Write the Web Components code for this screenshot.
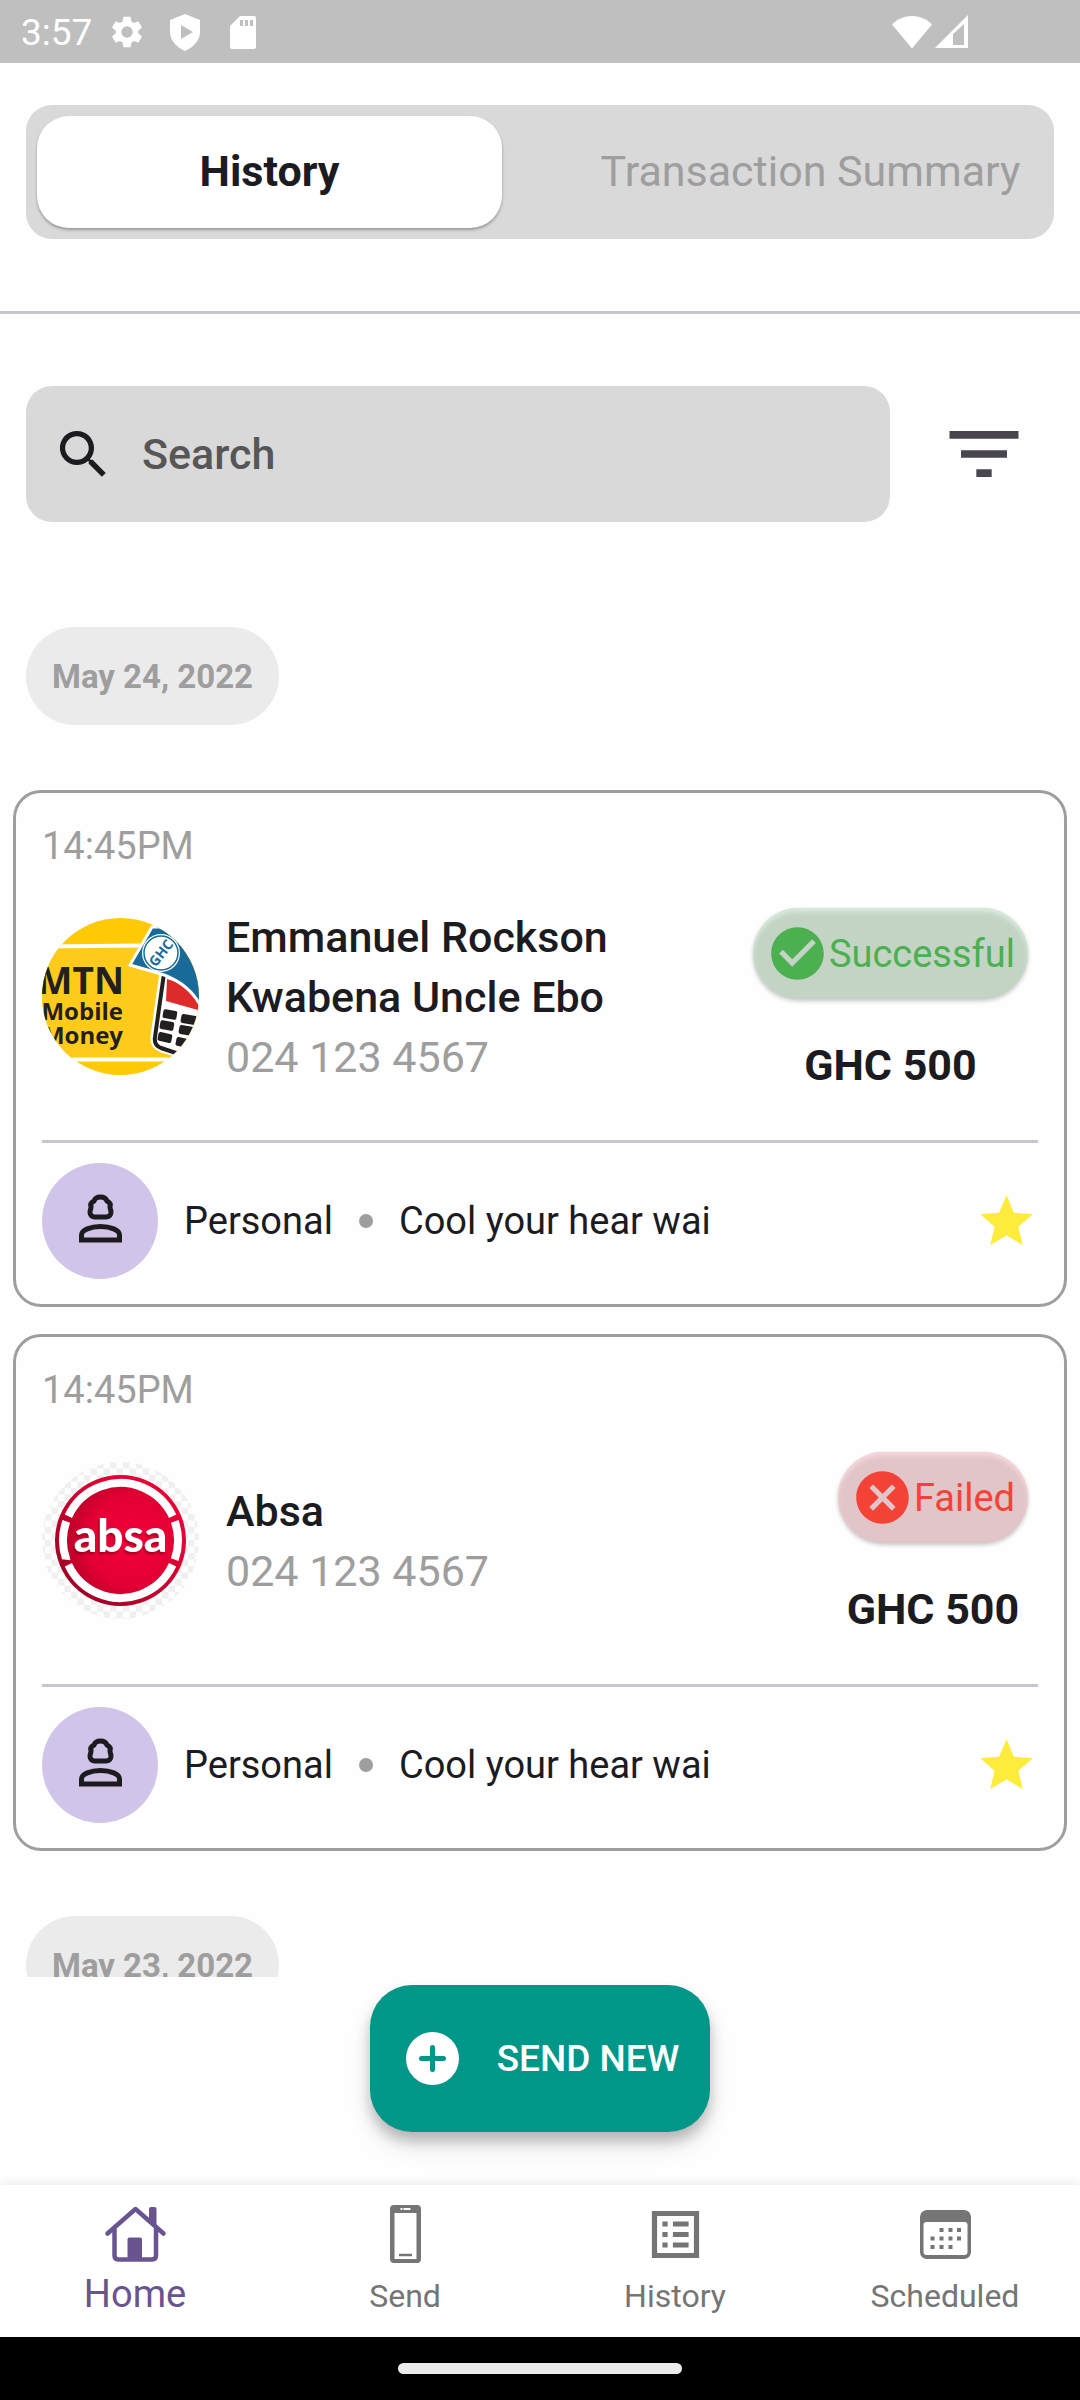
<!DOCTYPE html>
<html lang="en">
<head>
<meta charset="utf-8">
<meta name="viewport" content="width=device-width, initial-scale=1">
<title>Transactions</title>
<style>
  html, body { margin: 0; height: 100%; }
  body {
    background: #fefefe;
    color: #1c1b1f;
    font-family: Roboto, "Liberation Sans", sans-serif;
    font-size: 38px;
  }
</style>
</head>
<body>
<app-screen>
  <status-bar slot="status" time="3:57"></status-bar>
  <segmented-tabs slot="header">
    <tab-button selected>History</tab-button>
    <tab-button>Transaction Summary</tab-button>
  </segmented-tabs>
  <search-row slot="search"></search-row>

  <date-chip>May 24, 2022</date-chip>
  <card-stack>
    <transaction-card time="14:45PM" phone="024 123 4567" amount="GHC 500" category="Personal" note="Cool your hear wai">
      <mtn-logo slot="logo"></mtn-logo>
      <span slot="name">Emmanuel Rockson<br>Kwabena Uncle Ebo</span>
      <status-badge slot="status" kind="success">Successful</status-badge>
    </transaction-card>
    <transaction-card time="14:45PM" phone="024 123 4567" amount="GHC 500" category="Personal" note="Cool your hear wai">
      <absa-logo slot="logo"></absa-logo>
      <span slot="name">Absa</span>
      <status-badge slot="status" kind="failed">Failed</status-badge>
    </transaction-card>
  </card-stack>
  <date-chip>May 23, 2022</date-chip>

  <send-button slot="action">SEND NEW</send-button>
  <bottom-nav slot="nav">
    <nav-item icon="home" href="#home" active>Home</nav-item>
    <nav-item icon="send" href="#send">Send</nav-item>
    <nav-item icon="history" href="#history">History</nav-item>
    <nav-item icon="scheduled" href="#scheduled">Scheduled</nav-item>
  </bottom-nav>
  <gesture-bar slot="gesture"></gesture-bar>
</app-screen>

<script>
  const define = (name, render) => customElements.define(name, class extends HTMLElement {
    connectedCallback() {
      if (this.shadowRoot) return;
      this.attachShadow({ mode: "open" }).innerHTML =
        "<style>*{box-sizing:border-box}svg{display:block;flex:none}button{font:inherit;border:0;background:none;padding:0;margin:0;color:inherit}</style>" + render(this);
    }
  });

  define("app-screen", () => `
    <style>
      :host { display: flex; flex-direction: column; height: 100vh; overflow: hidden; }
      header { padding: 42px 26px 72px; border-bottom: 3px solid #cac4d0; }
      .search { padding: 72px 26px 0; }
      main { flex: 1; min-height: 0; overflow: hidden; display: flex; flex-direction: column; align-items: flex-start; gap: 65px; padding-top: 105px; }
      ::slotted(date-chip) { margin-left: 26px; }
      ::slotted(card-stack) { align-self: stretch; }
      .action { display: flex; justify-content: center; padding: 8px 0 53px; }
    </style>
    <slot name="status"></slot>
    <header><slot name="header"></slot></header>
    <div class="search"><slot name="search"></slot></div>
    <main><slot></slot></main>
    <div class="action"><slot name="action"></slot></div>
    <slot name="nav"></slot>
    <slot name="gesture"></slot>`);

  define("status-bar", el => `
    <style>
      :host { display: flex; align-items: center; justify-content: space-between; height: 63px; flex: none; padding: 0 112px 0 21px; background: #bfbfbf; color: #fff; font-size: 37px; }
      .group { display: flex; align-items: center; }
      .left { gap: 20px; }
      time { line-height: 60px; padding-top: 3px; margin-right: -4px; }
      .right { gap: 3px; }
    </style>
    <div class="group left">
      <time>${el.getAttribute("time")}</time>
      <svg width="38" height="40" viewBox="0 0 24 24" fill="#fff"><path d="M19.14 12.94c.04-.3.06-.61.06-.94s-.02-.64-.07-.94l2.03-1.58a.49.49 0 0 0 .12-.61l-1.92-3.32a.49.49 0 0 0-.59-.22l-2.39.96a7 7 0 0 0-1.62-.94l-.36-2.54a.48.48 0 0 0-.48-.41h-3.84a.47.47 0 0 0-.47.41l-.36 2.54c-.59.24-1.13.57-1.62.94l-2.39-.96a.48.48 0 0 0-.59.22L2.74 8.87a.47.47 0 0 0 .12.61l2.03 1.58a6 6 0 0 0 0 1.88l-2.03 1.58a.49.49 0 0 0-.12.61l1.92 3.32c.12.22.37.29.59.22l2.39-.96c.5.38 1.03.7 1.62.94l.36 2.54c.05.24.24.41.48.41h3.84c.24 0 .44-.17.47-.41l.36-2.54c.59-.24 1.13-.56 1.62-.94l2.39.96c.22.08.47 0 .59-.22l1.92-3.32a.47.47 0 0 0-.12-.61zM12 15.6a3.6 3.6 0 1 1 0-7.2 3.6 3.6 0 0 1 0 7.2z"/></svg>
      <svg width="38" height="40" viewBox="0 0 38 40"><path d="M19 2 34 8v12c0 8-6 15-15 19C10 35 4 28 4 20V8z" fill="#fff"/><path d="M15 13v14l12-7z" fill="#bfbfbf"/></svg>
      <svg width="38" height="40" viewBox="0 0 38 40"><path d="M16 4h14a2 2 0 0 1 2 2v29a2 2 0 0 1-2 2H8a2 2 0 0 1-2-2V14z" fill="#fff"/><path d="M16 8h3v6h-3zM21 8h3v6h-3zM26 8h3v6h-3z" fill="#bfbfbf"/></svg>
    </div>
    <div class="group right">
      <svg width="40" height="34" viewBox="0 0 40 34"><path d="M0 9.500C11-2 29-2 40 9.500L20 33.500z" fill="#fff"/></svg>
      <svg width="33" height="34" viewBox="0 0 33 34"><path d="M33 0v33H0zM29 9 18 19v11h11z" fill="#fff" fill-rule="evenodd"/></svg>
    </div>`);

  define("segmented-tabs", () => `
    <style>
      :host { display: flex; justify-content: space-between; gap: 76px; padding: 11px; border-radius: 26px; background: #d9d9d9; }
      ::slotted(tab-button) { flex: 1 1 0; min-width: 0; }
    </style>
    <slot></slot>`);

  define("tab-button", el => `
    <style>
      :host { display: block; }
      button { width: 100%; height: 112px; padding-bottom: 2px; border-radius: 32px; color: #9e9e9e; font-size: 43px; white-space: nowrap; }
      :host([selected]) button { background: #fff; color: #1c1b1f; font-weight: 700; box-shadow: 0 2px 3px rgba(0,0,0,.3); }
    </style>
    <button type="button" aria-pressed="${el.hasAttribute("selected")}"><slot></slot></button>`);

  define("search-row", () => `
    <style>
      :host { display: flex; align-items: center; gap: 48px; }
      label { flex: 1; display: flex; align-items: center; gap: 27px; height: 136px; padding: 0 26px; border-radius: 26px; background: #d9d9d9; }
      input { flex: 1; min-width: 0; border: 0; outline: 0; padding: 0; background: none; color: #1c1b1f; font: 500 43px/60px Roboto, "Liberation Sans", sans-serif; }
      input::placeholder { color: #565656; opacity: 1; }
      button { margin-right: 24px; }
    </style>
    <label>
      <svg width="63" height="63" viewBox="0 0 24 24" fill="#1c1b1f"><path d="M15.500 14h-.79l-.28-.27A6.471 6.471 0 0 0 16 9.500 6.500 6.500 0 1 0 9.500 16c1.610 0 3.090-.59 4.230-1.570l.27.28v.79l5 4.990L20.490 19l-4.990-5zm-6 0C7.010 14 5 11.990 5 9.500S7.010 5 9.500 5 14 7.010 14 9.500 11.990 14 9.500 14z"/></svg>
      <input type="text" placeholder="Search" aria-label="Search">
    </label>
    <button type="button" aria-label="Filter"><svg width="92" height="92" viewBox="0 0 24 24" fill="#49454f"><path d="M10 18h4v-2h-4v2zM3 6v2h18V6H3zm3 7h12v-2H6v2z"/></svg></button>`);

  define("date-chip", () => `
    <style>
      :host { display: block; flex: none; padding: 1px 26px 0; line-height: 97px; border-radius: 49px; background: #ebebeb; color: #9e9e9e; font-size: 33px; font-weight: 700; white-space: nowrap; }
    </style>
    <slot></slot>`);

  define("card-stack", () => `
    <style>:host { display: flex; flex-direction: column; flex: none; gap: 27px; padding: 0 13px; }</style>
    <slot></slot>`);

  define("transaction-card", el => {
    const a = n => el.getAttribute(n);
    return `
    <style>
      :host { display: block; padding: 26px 26px 25px; border: 3px solid #9e9e9e; border-radius: 28px; }
      .time { line-height: 54px; color: #9e9e9e; }
      .main { display: flex; align-items: center; gap: 27px; margin: 25px 0 45px; }
      .who { flex: 1; min-width: 0; font-size: 43px; line-height: 60px; }
      .name { font-weight: 500; }
      .phone { color: #9e9e9e; }
      .result { display: flex; flex-direction: column; align-items: center; gap: 36px; padding: 10px 10px 0 0; }
      .amount { font-size: 43px; line-height: 60px; font-weight: 700; }
      .foot { display: flex; align-items: center; gap: 26px; padding-top: 20px; border-top: 3px solid #cac4d0; }
      .tag { display: flex; align-items: center; justify-content: center; width: 116px; height: 116px; border-radius: 50%; background: #d1c4e9; }
      .dot { width: 14px; height: 14px; border-radius: 50%; background: #9e9e9e; }
      .note { flex: 1; }
    </style>
    <div class="time">${a("time")}</div>
    <div class="main">
      <slot name="logo"></slot>
      <div class="who">
        <div class="name"><slot name="name"></slot></div>
        <div class="phone">${a("phone")}</div>
      </div>
      <div class="result">
        <slot name="status"></slot>
        <div class="amount">${a("amount")}</div>
      </div>
    </div>
    <div class="foot">
      <div class="tag"><svg width="63" height="63" viewBox="0 0 63 63" fill="none" stroke="#1c1b1f" stroke-width="5"><path d="M26 27h11c3 0 5-2 5-5 0-2-1-3-1-5 1-3-1-5-3-6-1-3-4-4-6.500-4S26 8 25 11c-2 1-4 3-3 6 0 2-1 3-1 5 0 3 2 5 5 5z"/><path d="M12.500 50V45c0-5 9-8.500 19-8.500s19 3.500 19 8.500v5z"/></svg></div>
      <span>${a("category")}</span>
      <span class="dot"></span>
      <span class="note">${a("note")}</span>
      <button type="button" aria-label="Favourite"><svg width="63" height="63" viewBox="0 0 24 24" fill="#ffeb3b"><path d="M12 17.270 18.180 21l-1.640-7.030L22 9.240l-7.190-.61L12 2 9.190 8.630 2 9.240l5.460 4.730L5.820 21z"/></svg></button>
    </div>`;
  });

  define("status-badge", el => {
    const ok = el.getAttribute("kind") === "success";
    const mark = ok
      ? "M12 2C6.480 2 2 6.480 2 12s4.480 10 10 10 10-4.480 10-10S17.520 2 12 2zm-2 15-5-5 1.410-1.410L10 14.170l7.590-7.590L19 8l-9 9z"
      : "M12 2C6.470 2 2 6.470 2 12s4.470 10 10 10 10-4.470 10-10S17.530 2 12 2zm5 13.590L15.590 17 12 13.410 8.410 17 7 15.590 10.590 12 7 8.410 8.410 7 12 10.590 15.590 7 17 8.410 13.410 12 17 15.590z";
    return `
    <style>
      :host { display: flex; align-items: center; height: 91px; padding: 0 13px; border-radius: 46px; white-space: nowrap;
        color: ${ok ? "#4caf50" : "#f44336"}; background: ${ok ? "#c3d4c4" : "#e2c5c8"};
        box-shadow: inset 0 4px 4px ${ok ? "#d7eadb" : "#f6d6da"}, 0 2px 4px rgba(0,0,0,.22); }
    </style>
    <svg width="63" height="63" viewBox="0 0 24 24" fill="currentColor"><path d="${mark}"/></svg>
    <slot></slot>`;
  });

  define("mtn-logo", () => `
    <style>:host { display: block; flex: none; } text { font-family: "Open Sans", sans-serif; font-weight: 700; }</style>
    <svg width="157" height="157" viewBox="0 0 157 157" role="img" aria-label="MTN Mobile Money">
      <clipPath id="round"><circle cx="78.500" cy="78.500" r="78.500"/></clipPath>
      <g clip-path="url(#round)">
        <path d="M0 0h157v157H0z" fill="#ffc905"/>
        <path d="M0 28h157v113H0z" fill="#ffcb1b"/>
        <path d="M0 28.500 100 27.500M0 141.500h157" stroke="#fff" stroke-width="4"/>
        <g fill="#231f20" text-anchor="end">
          <text x="82" y="76" font-size="37">MTN</text>
          <text x="81" y="102" font-size="24">Mobile</text>
          <text x="81" y="126" font-size="24">Money</text>
        </g>
        <path d="M120 54 111 118c-1 8 2 12 9 14l20 6 22-20V78z" fill="#fff" stroke="#fff" stroke-width="5"/>
        <path d="M121.500 59 113 119c-1 6 1 9 6 11l15 5" fill="none" stroke="#231f20" stroke-width="4" stroke-linecap="round"/>
        <path d="M125 61c13 3 24 12 31 24v7l-32-9z" fill="#de2a2b"/>
        <path d="M110 9 88 47l28 8c17 5 32 15 41 30h6V9z" fill="#186a99" stroke="#fff" stroke-width="3"/>
        <circle cx="119" cy="35" r="19" fill="#fff"/>
        <circle cx="119" cy="35" r="17" fill="none" stroke="#186a99" stroke-width="1.500"/>
        <text x="119" y="40" font-size="14" fill="#186a99" text-anchor="middle" transform="rotate(-52 119 35)">GHC</text>
        <g fill="#231f20">
          <rect x="121" y="92" width="14" height="9" rx="2" transform="rotate(10 128 96)"/>
          <rect x="118" y="103" width="14" height="9" rx="2" transform="rotate(10 125 107)"/>
          <rect x="116" y="115" width="14" height="9" rx="2" transform="rotate(12 123 119)"/>
          <rect x="139" y="97" width="16" height="9" rx="2" transform="rotate(10 147 101)"/>
          <rect x="137" y="108" width="16" height="9" rx="2" transform="rotate(10 145 112)"/>
          <rect x="134" y="120" width="14" height="9" rx="2" transform="rotate(12 141 124)"/>
        </g>
      </g>
    </svg>`);

  define("absa-logo", () => `
    <style>:host { display: block; flex: none; } text { font-family: Lato, sans-serif; font-weight: 900; filter: drop-shadow(-1px 2px 1px rgba(110,0,20,.6)); }</style>
    <svg width="157" height="157" viewBox="0 0 157 157" role="img" aria-label="Absa">
      <defs>
        <pattern id="check" width="13" height="13" patternUnits="userSpaceOnUse" x="3"><path d="M0 0h6.500v6.500H0zM6.500 6.500H13V13H6.500z" fill="#f0f0f0"/></pattern>
        <radialGradient id="red" cx=".62" cy=".5" r=".68"><stop offset="0" stop-color="#f50039"/><stop offset=".6" stop-color="#e30034"/><stop offset="1" stop-color="#b00025"/></radialGradient>
        <linearGradient id="rim" x1="0" y1="1" x2="1" y2="0"><stop offset="0" stop-color="#8f0020"/><stop offset=".7" stop-color="#e60035"/></linearGradient>
      </defs>
      <circle cx="78.500" cy="78.500" r="78.500" fill="url(#check)"/>
      <circle cx="78.500" cy="78.500" r="65.500" fill="url(#rim)"/>
      <circle cx="78.500" cy="78.500" r="56" fill="url(#red)"/>
      <circle cx="78.500" cy="78.500" r="57.500" fill="none" stroke="#fff" stroke-width="8" pathLength="360" stroke-dasharray="39 5.500 130 5.500 39 5.500 130 5.500" transform="rotate(-19.500 78.500 78.500)"/>
      <text x="78.500" y="90" font-size="46" text-anchor="middle" fill="#fff">absa</text>
    </svg>`);

  define("send-button", () => `
    <style>
      :host { display: block; font-size: 37px; }
      button { display: flex; align-items: center; gap: 33px; height: 147px; padding: 0 31px; border-radius: 42px; background: #009688; color: #fff; font-weight: 500; white-space: nowrap;
        box-shadow: 0 9px 14px rgba(0,0,0,.24), 0 16px 26px rgba(0,0,0,.08); }
    </style>
    <button type="button"><svg width="63" height="63" viewBox="0 0 63 63"><circle cx="31.500" cy="31.500" r="26.500" fill="#fff"/><path d="M31.500 20.500v22M20.500 31.500h22" stroke="#009688" stroke-width="5" stroke-linecap="round"/></svg><slot></slot></button>`);

  define("bottom-nav", () => `
    <style>
      :host { display: block; flex: none; background: #fff; box-shadow: 0 -2px 8px rgba(0,0,0,.07); }
      nav { display: flex; height: 152px; padding-top: 18px; }
      ::slotted(nav-item) { flex: 1 1 0; }
    </style>
    <nav aria-label="Main"><slot></slot></nav>`);

  const navIcons = {
    home: `<path d="M3.500 30.500 31.500 6l28 24.500M10.500 26v26.500c0 2.500 1.500 4 4 4H48c2.500 0 4-1.500 4-4V26" fill="none" stroke="currentColor" stroke-width="4.500" stroke-linecap="round" stroke-linejoin="round"/><path d="M25 34.500h11a2 2 0 0 1 2 2V57H23.500V36.500a2 2 0 0 1 1.500-2zM45 6a2 2 0 0 1 2-2h3.500a2 2 0 0 1 2 2v19L45 18z" fill="currentColor"/>`,
    send: `<path d="M20 2h23a4 4 0 0 1 4 4v50a4 4 0 0 1-4 4H20a4 4 0 0 1-4-4V6a4 4 0 0 1 4-4zM20.500 10v46h22V10zM26.500 5v2h2V5zM29.500 5v2h7V5z" fill="currentColor" fill-rule="evenodd"/><path d="M25 52h13" stroke="currentColor" stroke-width="2.500"/>`,
    history: `<path d="M7.900 7.900h47.200v47.200H7.900zM13.100 13.100v36.800h36.800V13.100zM18.400 18.400h5.200v5.200h-5.200zM28.900 18.400h15.700v5.200H28.900zM18.400 28.900h5.200v5.200h-5.200zM28.900 28.900h15.700v5.200H28.900zM18.400 39.400h5.200v5.200h-5.200zM28.900 39.400h15.700v5.200H28.900z" fill="currentColor" fill-rule="evenodd"/>`,
    scheduled: `<path d="M13 7h37a7 7 0 0 1 7 7v35a7 7 0 0 1-7 7H13a7 7 0 0 1-7-7V14a7 7 0 0 1 7-7zM12.500 19a3 3 0 0 0-3 3v27a3 3 0 0 0 3 3h38a3 3 0 0 0 3-3V22a3 3 0 0 0-3-3z" fill="currentColor" fill-rule="evenodd"/><path d="M25.500 27h4M34.500 27h4M43 27h4M16.500 35.500h4M25.500 35.500h4M34.500 35.500h4M43 35.500h4M16.500 44h4M25.500 44h4M34.500 44h4" stroke="currentColor" stroke-width="4"/>`
  };

  define("nav-item", el => `
    <style>
      :host { display: block; min-width: 0; }
      a { display: flex; flex-direction: column; align-items: center; gap: 7px; color: #757575; font-size: 32px; line-height: 46px; text-decoration: none; }
      :host([active]) a { color: #6a5490; font-size: 38px; line-height: 42px; }
    </style>
    <a href="${el.getAttribute("href")}"><svg width="63" height="63" viewBox="0 0 63 63" aria-hidden="true">${navIcons[el.getAttribute("icon")]}</svg><slot></slot></a>`);

  define("gesture-bar", () => `
    <style>
      :host { display: flex; flex: none; justify-content: center; align-items: center; height: 63px; background: #000; }
      i { width: 284px; height: 11px; border-radius: 6px; background: #ebebeb; }
    </style>
    <i></i>`);
</script>
</body>
</html>
